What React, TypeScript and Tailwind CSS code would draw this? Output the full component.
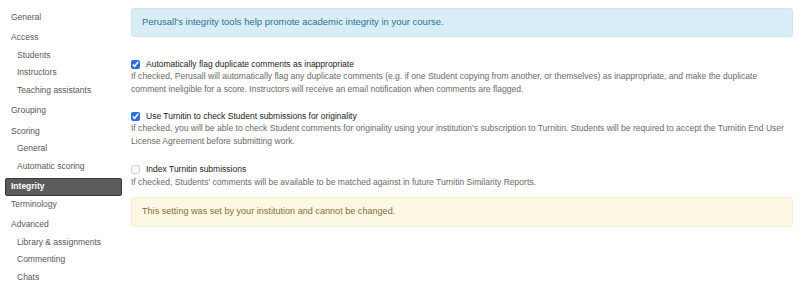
import React from 'react';

type NavItem = { label: string; sub?: boolean; active?: boolean; flush?: boolean };

const nav: NavItem[] = [
  { label: 'General' },
  { label: 'Access' },
  { label: 'Students', sub: true },
  { label: 'Instructors', sub: true },
  { label: 'Teaching assistants', sub: true },
  { label: 'Grouping' },
  { label: 'Scoring' },
  { label: 'General', sub: true },
  { label: 'Automatic scoring', sub: true },
  { label: 'Integrity', active: true },
  { label: 'Terminology', flush: true },
  { label: 'Advanced' },
  { label: 'Library & assignments', sub: true },
  { label: 'Commenting', sub: true },
  { label: 'Chats', sub: true },
];

function Sidebar() {
  return (
    <nav className="flex w-[122px] shrink-0 flex-col pt-[8.5px] pl-[5px]">
      {nav.map((item, i) => {
        const top = i > 0 && !item.sub && !item.flush;
        if (item.active) {
          return (
            <div
              key={i}
              className={`flex h-[17.5px] items-center rounded-[2px] border border-[#3a3a3a] bg-[#5b5b5b] pl-[5px] font-bold text-white ${top ? 'mt-[3px]' : ''}`}
            >
              {item.label}
            </div>
          );
        }
        return (
          <div
            key={i}
            className={`flex h-[17.5px] items-center text-[#595959] ${item.sub ? 'pl-[12px]' : 'pl-[6px]'} ${top ? 'mt-[3px]' : ''}`}
          >
            {item.label}
          </div>
        );
      })}
    </nav>
  );
}

function Setting({
  label,
  checked,
  disabled,
  lines,
  className = '',
}: {
  label: string;
  checked?: boolean;
  disabled?: boolean;
  lines: string[];
  className?: string;
}) {
  return (
    <div className={className}>
      <label className="flex items-center gap-[6px] leading-[12.5px] text-[#222]">
        <input
          type="checkbox"
          defaultChecked={checked}
          disabled={disabled}
          className="m-0 h-[9px] w-[9px] accent-[#2f6fd8]"
        />
        <span>{label}</span>
      </label>
      <p className="whitespace-nowrap text-[8.55px] leading-[12.5px] text-[#6a6a6a]">
        {lines.map((l, i) => (
          <React.Fragment key={i}>
            {i > 0 && <br />}
            {l}
          </React.Fragment>
        ))}
      </p>
    </div>
  );
}

export default function App() {
  return (
    <div
      className="flex h-[294px] w-[800px] gap-[9px] overflow-hidden bg-white text-[8.5px]"
      style={{ fontFamily: '"Liberation Sans", Arial, sans-serif' }}
    >
      <Sidebar />
      <main className="flex w-[662px] flex-col pt-[8px]">
        <div className="flex h-[29px] items-center rounded-[3px] border border-[#cfe6f2] bg-[#d9edf7] px-[10px] text-[9.5px] text-[#31708f]">
          Perusall's integrity tools help promote academic integrity in your course.
        </div>

        <Setting
          label="Automatically flag duplicate comments as inappropriate"
          checked
          className="mt-[20.75px]"
          lines={[
            'If checked, Perusall will automatically flag any duplicate comments (e.g. if one Student copying from another, or themselves) as inappropriate, and make the duplicate',
            'comment ineligible for a score. Instructors will receive an email notification when comments are flagged.',
          ]}
        />

        <Setting
          label="Use Turnitin to check Student submissions for originality"
          checked
          className="mt-[14.5px]"
          lines={[
            "If checked, you will be able to check Student comments for originality using your institution's subscription to Turnitin. Students will be required to accept the Turnitin End User",
            'License Agreement before submitting work.',
          ]}
        />

        <Setting
          label="Index Turnitin submissions"
          disabled
          className="mt-[16px]"
          lines={["If checked, Students' comments will be available to be matched against in future Turnitin Similarity Reports."]}
        />

        <div className="mt-[9px] flex h-[30px] items-center rounded-[3px] border border-[#f7eccf] bg-[#fcf8e3] px-[10px] text-[9.1px] text-[#8a6d3b]">
          This setting was set by your institution and cannot be changed.
        </div>
      </main>
    </div>
  );
}
